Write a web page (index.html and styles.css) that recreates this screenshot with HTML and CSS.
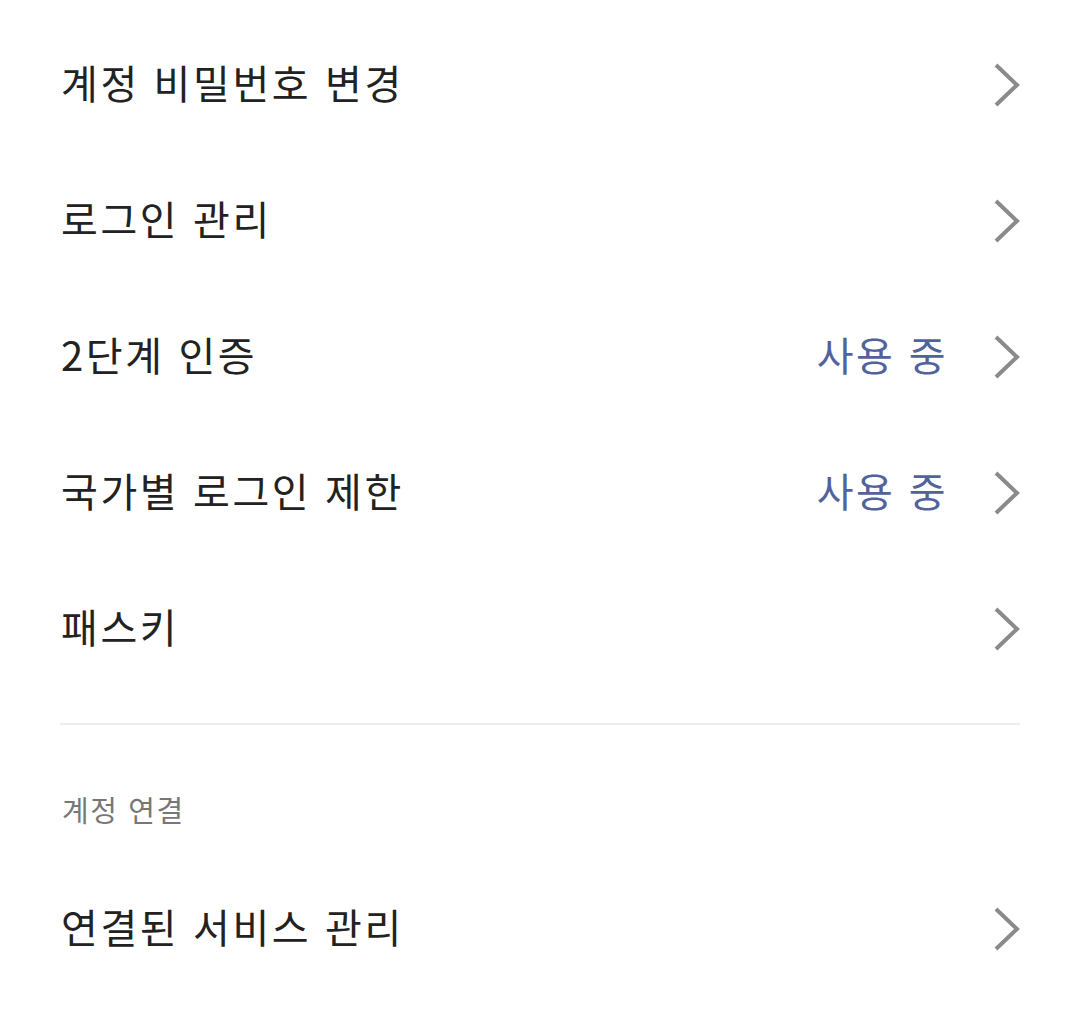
FILE: index.html
```html
<!DOCTYPE html>
<html lang="ko">
<head>
    <meta charset="UTF-8" />
    <meta name="viewport" content="width=device-width, initial-scale=1.0" />
    <title>보안 설정</title>
    <link rel="stylesheet" href="styles.css">
</head>
<body>
    <div class="settings">
        <ul class="menu">
            <li class="menu-item">
                <span class="label">계정 비밀번호 변경</span>
                <svg class="chevron" viewBox="0 0 28 46"><polyline points="3,3 24,23 3,43" /></svg>
            </li>
            <li class="menu-item">
                <span class="label">로그인 관리</span>
                <svg class="chevron" viewBox="0 0 28 46"><polyline points="3,3 24,23 3,43" /></svg>
            </li>
            <li class="menu-item">
                <span class="label">2단계 인증</span>
                <span class="status">사용 중</span>
                <svg class="chevron" viewBox="0 0 28 46"><polyline points="3,3 24,23 3,43" /></svg>
            </li>
            <li class="menu-item">
                <span class="label">국가별 로그인 제한</span>
                <span class="status">사용 중</span>
                <svg class="chevron" viewBox="0 0 28 46"><polyline points="3,3 24,23 3,43" /></svg>
            </li>
            <li class="menu-item">
                <span class="label">패스키</span>
                <svg class="chevron" viewBox="0 0 28 46"><polyline points="3,3 24,23 3,43" /></svg>
            </li>
        </ul>

        <hr class="divider">

        <h3 class="section-title">계정 연결</h3>
        <ul class="menu">
            <li class="menu-item">
                <span class="label">연결된 서비스 관리</span>
                <svg class="chevron" viewBox="0 0 28 46"><polyline points="3,3 24,23 3,43" /></svg>
            </li>
        </ul>
    </div>
</body>
</html>
```

FILE: styles.css
```css
body {
    margin: 0;
    background: #fff;
    font-family: "Noto Sans CJK KR", "Noto Sans", sans-serif;
    color: #222;
}

.settings {
    padding: 17px 60px 0 60px;
}

.menu {
    list-style: none;
    margin: 0;
    padding: 0;
}

.menu-item {
    display: flex;
    align-items: center;
    height: 136px;
}

.label {
    flex: 1;
    font-size: 40px;
    line-height: 40px;
    letter-spacing: 2.6px;
    padding: 0 0 6px 1px;
}

.status {
    font-size: 40px;
    line-height: 40px;
    letter-spacing: 2.4px;
    color: #52639c;
    margin-right: 45px;
    padding-bottom: 6px;
}

.chevron {
    width: 28px;
    height: 46px;
    margin-right: -1px;
}

    .chevron polyline {
        fill: none;
        stroke: #8a8a8a;
        stroke-width: 4;
    }

.divider {
    border: none;
    height: 2px;
    background: #ededed;
    margin: 26px 0 0 0;
}

.section-title {
    margin: 0;
    padding: 64px 0 32px 2px;
    font-size: 29px;
    line-height: 40px;
    letter-spacing: 1.6px;
    font-weight: normal;
    color: #777;
}
```
